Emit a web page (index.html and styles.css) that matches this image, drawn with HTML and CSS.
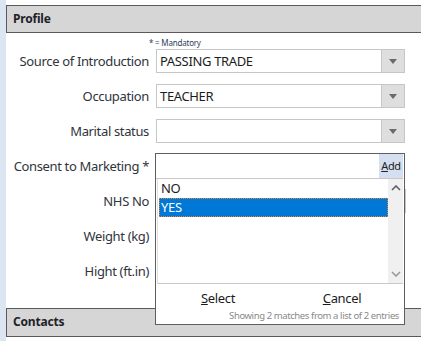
FILE: index.html
```html
<!DOCTYPE html>
<html lang="en">
<head>
    <meta charset="UTF-8">
    <meta name="viewport" content="width=device-width, initial-scale=1.0">
    <title>Profile</title>
    <link rel="stylesheet" href="styles.css">
</head>
<body>
    <div class="page">
        <div class="section-head">Profile</div>
        <div class="mandatory">* = Mandatory</div>

        <!-- Profile fields -->
        <div class="form">
            <label>Source of Introduction</label>
            <div class="select"><span class="value">PASSING TRADE</span><span class="drop"></span></div>

            <label>Occupation</label>
            <div class="select"><span class="value">TEACHER</span><span class="drop"></span></div>

            <label>Marital status</label>
            <div class="select"><span class="value"></span><span class="drop"></span></div>

            <label>Consent to Marketing *</label>
            <div class="combo">
                <div class="text-input"></div>
                <!-- Open lookup popup -->
                <div class="popup">
                    <div class="popup-search">
                        <span class="search-box"></span>
                        <span class="add-btn"><u>A</u>dd</span>
                    </div>
                    <div class="listbox">
                        <div class="items">
                            <div class="item">NO</div>
                            <div class="item selected">YES</div>
                        </div>
                        <div class="scrollbar">
                            <svg width="10" height="6" viewBox="0 0 10 6"><path d="M1 5 L5 1 L9 5" fill="none" stroke="#606060" stroke-width="1.6"/></svg>
                            <svg width="10" height="6" viewBox="0 0 10 6"><path d="M1 1 L5 5 L9 1" fill="none" stroke="#9a9a9a" stroke-width="1.6"/></svg>
                        </div>
                    </div>
                    <div class="popup-actions">
                        <span><u>S</u>elect</span>
                        <span><u>C</u>ancel</span>
                    </div>
                    <div class="popup-info">Showing 2 matches from a list of 2 entries</div>
                </div>
            </div>

            <label>NHS No</label>
            <div class="text-input wide"></div>

            <label>Weight (kg)</label>
            <div class="text-input"></div>

            <label>Hight (ft.in)</label>
            <div class="text-input"></div>
        </div>

        <div class="section-head contacts">Contacts</div>
    </div>
</body>
</html>
```

FILE: styles.css
```css
/* General Body Styling */
body {
    font-family: 'Noto Sans', 'Open Sans', sans-serif;
    background-color: #ffffff;
    color: #30343c;
    letter-spacing: -0.35px;
    margin: 0;
    padding: 0;
}

.page {
    width: 415px;
    height: 341px;
    border-left: 6px solid #dce6f2;
    overflow: hidden;
}

/* Section headers */
.section-head {
    margin-top: 5px;
    height: 26px;
    line-height: 26px;
    padding-left: 6px;
    background-color: #d6d6d6;
    border-top: 1px solid #5a5a5a;
    border-bottom: 1px solid #5a5a5a;
    border-left: 1px solid #5a5a5a;
    font-size: 12px;
    font-weight: bold;
    letter-spacing: -0.2px;
    color: #1e2228;
}

.section-head.contacts {
    margin-top: 25px;
    height: 27px;
}

.mandatory {
    margin-left: 143px;
    padding-top: 4px;
    font-size: 8px;
    line-height: 11px;
    letter-spacing: -0.2px;
    color: #2c3e5c;
}

/* Form grid */
.form {
    margin-top: 1px;
    display: grid;
    grid-template-columns: 143px 250px;
    grid-auto-rows: 24px;
    column-gap: 7px;
    row-gap: 11px;
}

label {
    font-size: 13px;
    text-align: right;
    align-self: center;
    white-space: nowrap;
}

.select {
    width: 249px;
    height: 24px;
    box-sizing: border-box;
    display: flex;
    border: 1px solid #c6c6c6;
    background-color: #ffffff;
}

.select .value {
    flex: 1;
    font-size: 13px;
    line-height: 22px;
    padding-left: 3px;
    color: #1c1c1c;
}

.select .drop {
    width: 22px;
    background-color: #dedede;
    border-left: 1px solid #c6c6c6;
    position: relative;
}

.select .drop::after {
    content: "";
    position: absolute;
    left: 7px;
    top: 9px;
    border-left: 4px solid transparent;
    border-right: 4px solid transparent;
    border-top: 5px solid #6a6a6a;
}

.text-input {
    width: 249px;
    height: 24px;
    box-sizing: border-box;
    border: 1px solid #c6c6c6;
    background-color: #ffffff;
}

.text-input.wide {
    width: 250px;
}

/* Lookup popup */
.combo {
    position: relative;
}

.popup {
    position: absolute;
    left: -1px;
    top: -1px;
    width: 250px;
    height: 172px;
    box-sizing: border-box;
    border: 1px solid #5e5e5e;
    background-color: #ffffff;
    display: flex;
    flex-direction: column;
}

.popup-search {
    display: flex;
    height: 24px;
    border-bottom: 1px solid #c8c8c8;
    margin-right: 1px;
}

.search-box {
    flex: 1;
}

.add-btn {
    width: 24px;
    background-color: #d4dff0;
    font-size: 11px;
    line-height: 24px;
    text-align: center;
    color: #222;
}

.listbox {
    display: flex;
    height: 104px;
    margin: 0 1px 0 1px;
    border-bottom: 1px solid #c8c8c8;
    border-left: 1px solid #e0e0e0;
}

.items {
    flex: 1;
}

.item {
    height: 19px;
    line-height: 19px;
    font-size: 13px;
    padding-left: 2px;
    margin-left: 1px;
    color: #1c1c1c;
}

.item.selected {
    background-color: #0078d7;
    color: #ffffff;
    outline: 1px dotted #f08020;
    outline-offset: -1px;
}

.scrollbar {
    width: 15px;
    background-color: #f0f0f0;
    display: flex;
    flex-direction: column;
    justify-content: space-between;
    align-items: center;
    padding: 6px 0 6px 0;
}

.popup-actions {
    display: grid;
    grid-template-columns: 1fr 1fr;
    text-align: center;
    font-size: 13px;
    padding-top: 5px;
    line-height: 18px;
    color: #1c1c1c;
}

.popup-info {
    text-align: right;
    padding-right: 5px;
    font-size: 9.5px;
    line-height: 14px;
    margin-top: 2px;
    letter-spacing: -0.4px;
    color: #8a8a8a;
}
```
